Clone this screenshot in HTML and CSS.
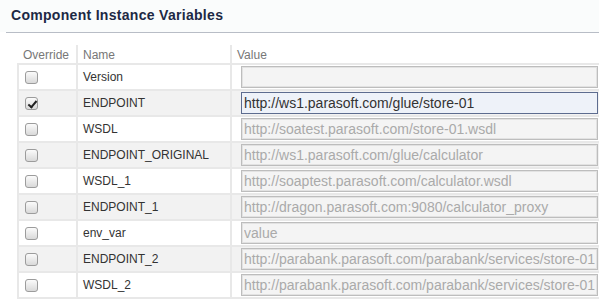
FILE: index.html
```html
<!DOCTYPE html>
<html lang="en">
<head>
  <meta charset="UTF-8">
  <title>Component Instance Variables</title>
  <link rel="stylesheet" href="styles.css">
</head>
<body>
  <div class="panel-head">
    <h2>Component Instance Variables</h2>
  </div>
  <div class="rule"></div>

  <div class="vars">
    <table>
      <thead>
        <tr>
          <th class="col-override">Override</th>
          <th class="col-name">Name</th>
          <th class="col-value">Value</th>
        </tr>
      </thead>
      <tbody>
        <tr>
          <td><input type="checkbox" class="chk"></td>
          <td>Version</td>
          <td><input type="text" class="val" value="" disabled></td>
        </tr>
        <tr>
          <td><input type="checkbox" class="chk" checked></td>
          <td>ENDPOINT</td>
          <td><input type="text" class="val" value="http://ws1.parasoft.com/glue/store-01"></td>
        </tr>
        <tr>
          <td><input type="checkbox" class="chk"></td>
          <td>WSDL</td>
          <td><input type="text" class="val" value="http://soatest.parasoft.com/store-01.wsdl" disabled></td>
        </tr>
        <tr>
          <td><input type="checkbox" class="chk"></td>
          <td>ENDPOINT_ORIGINAL</td>
          <td><input type="text" class="val" value="http://ws1.parasoft.com/glue/calculator" disabled></td>
        </tr>
        <tr>
          <td><input type="checkbox" class="chk"></td>
          <td>WSDL_1</td>
          <td><input type="text" class="val" value="http://soaptest.parasoft.com/calculator.wsdl" disabled></td>
        </tr>
        <tr>
          <td><input type="checkbox" class="chk"></td>
          <td>ENDPOINT_1</td>
          <td><input type="text" class="val" value="http://dragon.parasoft.com:9080/calculator_proxy" disabled></td>
        </tr>
        <tr>
          <td><input type="checkbox" class="chk"></td>
          <td>env_var</td>
          <td><input type="text" class="val" value="value" disabled></td>
        </tr>
        <tr>
          <td><input type="checkbox" class="chk"></td>
          <td>ENDPOINT_2</td>
          <td><input type="text" class="val" value="http://parabank.parasoft.com/parabank/services/store-01" disabled></td>
        </tr>
        <tr>
          <td><input type="checkbox" class="chk"></td>
          <td>WSDL_2</td>
          <td><input type="text" class="val" value="http://parabank.parasoft.com/parabank/services/store-01?wsdl" disabled></td>
        </tr>
      </tbody>
    </table>
  </div>
</body>
</html>
```

FILE: styles.css
```css
body {
  margin: 0;
  font-family: "Liberation Sans", Arial, sans-serif;
  background-color: white;
  overflow: hidden;
}

.panel-head {
  background-color: #fafcfc;
  height: 32px;
  padding-left: 11px;
}

.panel-head h2 {
  margin: 0;
  font-size: 14px;
  line-height: 30px;
  letter-spacing: 0.3px;
  color: #1d2945;
}

.rule {
  margin-left: 6px;
  height: 1px;
  background-color: #b8bdc6;
}

.vars {
  padding: 12px 0 0 17px;
}

table {
  border-collapse: collapse;
  width: 586px;
  font-size: 12px;
  color: #333;
}

th {
  font-weight: normal;
  color: #777;
  text-align: left;
  height: 18px;
  padding: 0 5px;
  vertical-align: bottom;
  line-height: 16px;
}

th + th {
  border-left: 2px solid #e8e8e8;
}

.col-override {
  width: 48px;
}

.col-name {
  width: 142px;
}

td {
  border: 2px solid #e8e8e8;
  height: 24px;
  padding: 0 5px;
  vertical-align: middle;
}

tbody tr:nth-child(even) td {
  background-color: #f2f2f2;
}

td:last-child {
  padding: 0 3px 0 9px;
}

.chk {
  appearance: none;
  -webkit-appearance: none;
  display: block;
  width: 13px;
  height: 13px;
  margin: 0 0 0 1px;
  border: 1px solid #9c9c9c;
  border-radius: 3px;
  background: linear-gradient(#fbfbfb, #d9d9d9);
  position: relative;
}

.chk:checked::after {
  content: "";
  position: absolute;
  left: 4px;
  top: 1px;
  width: 3px;
  height: 7px;
  border: solid #222;
  border-width: 0 2px 2px 0;
  transform: rotate(40deg);
}

.val {
  display: block;
  box-sizing: border-box;
  width: 100%;
  height: 22px;
  padding: 0 2px;
  border: 1px solid #bdbdbd;
  box-shadow: inset 0 0 0 1px #e2e2e2;
  background-color: #f4f4f4;
  font-family: "Liberation Sans", Arial, sans-serif;
  font-size: 14px;
  color: #333;
}

.val:disabled {
  color: #aaa;
}

.val:not(:disabled) {
  background-color: #eef2f9;
  border-color: #5d6c8f;
  box-shadow: none;
}
```
